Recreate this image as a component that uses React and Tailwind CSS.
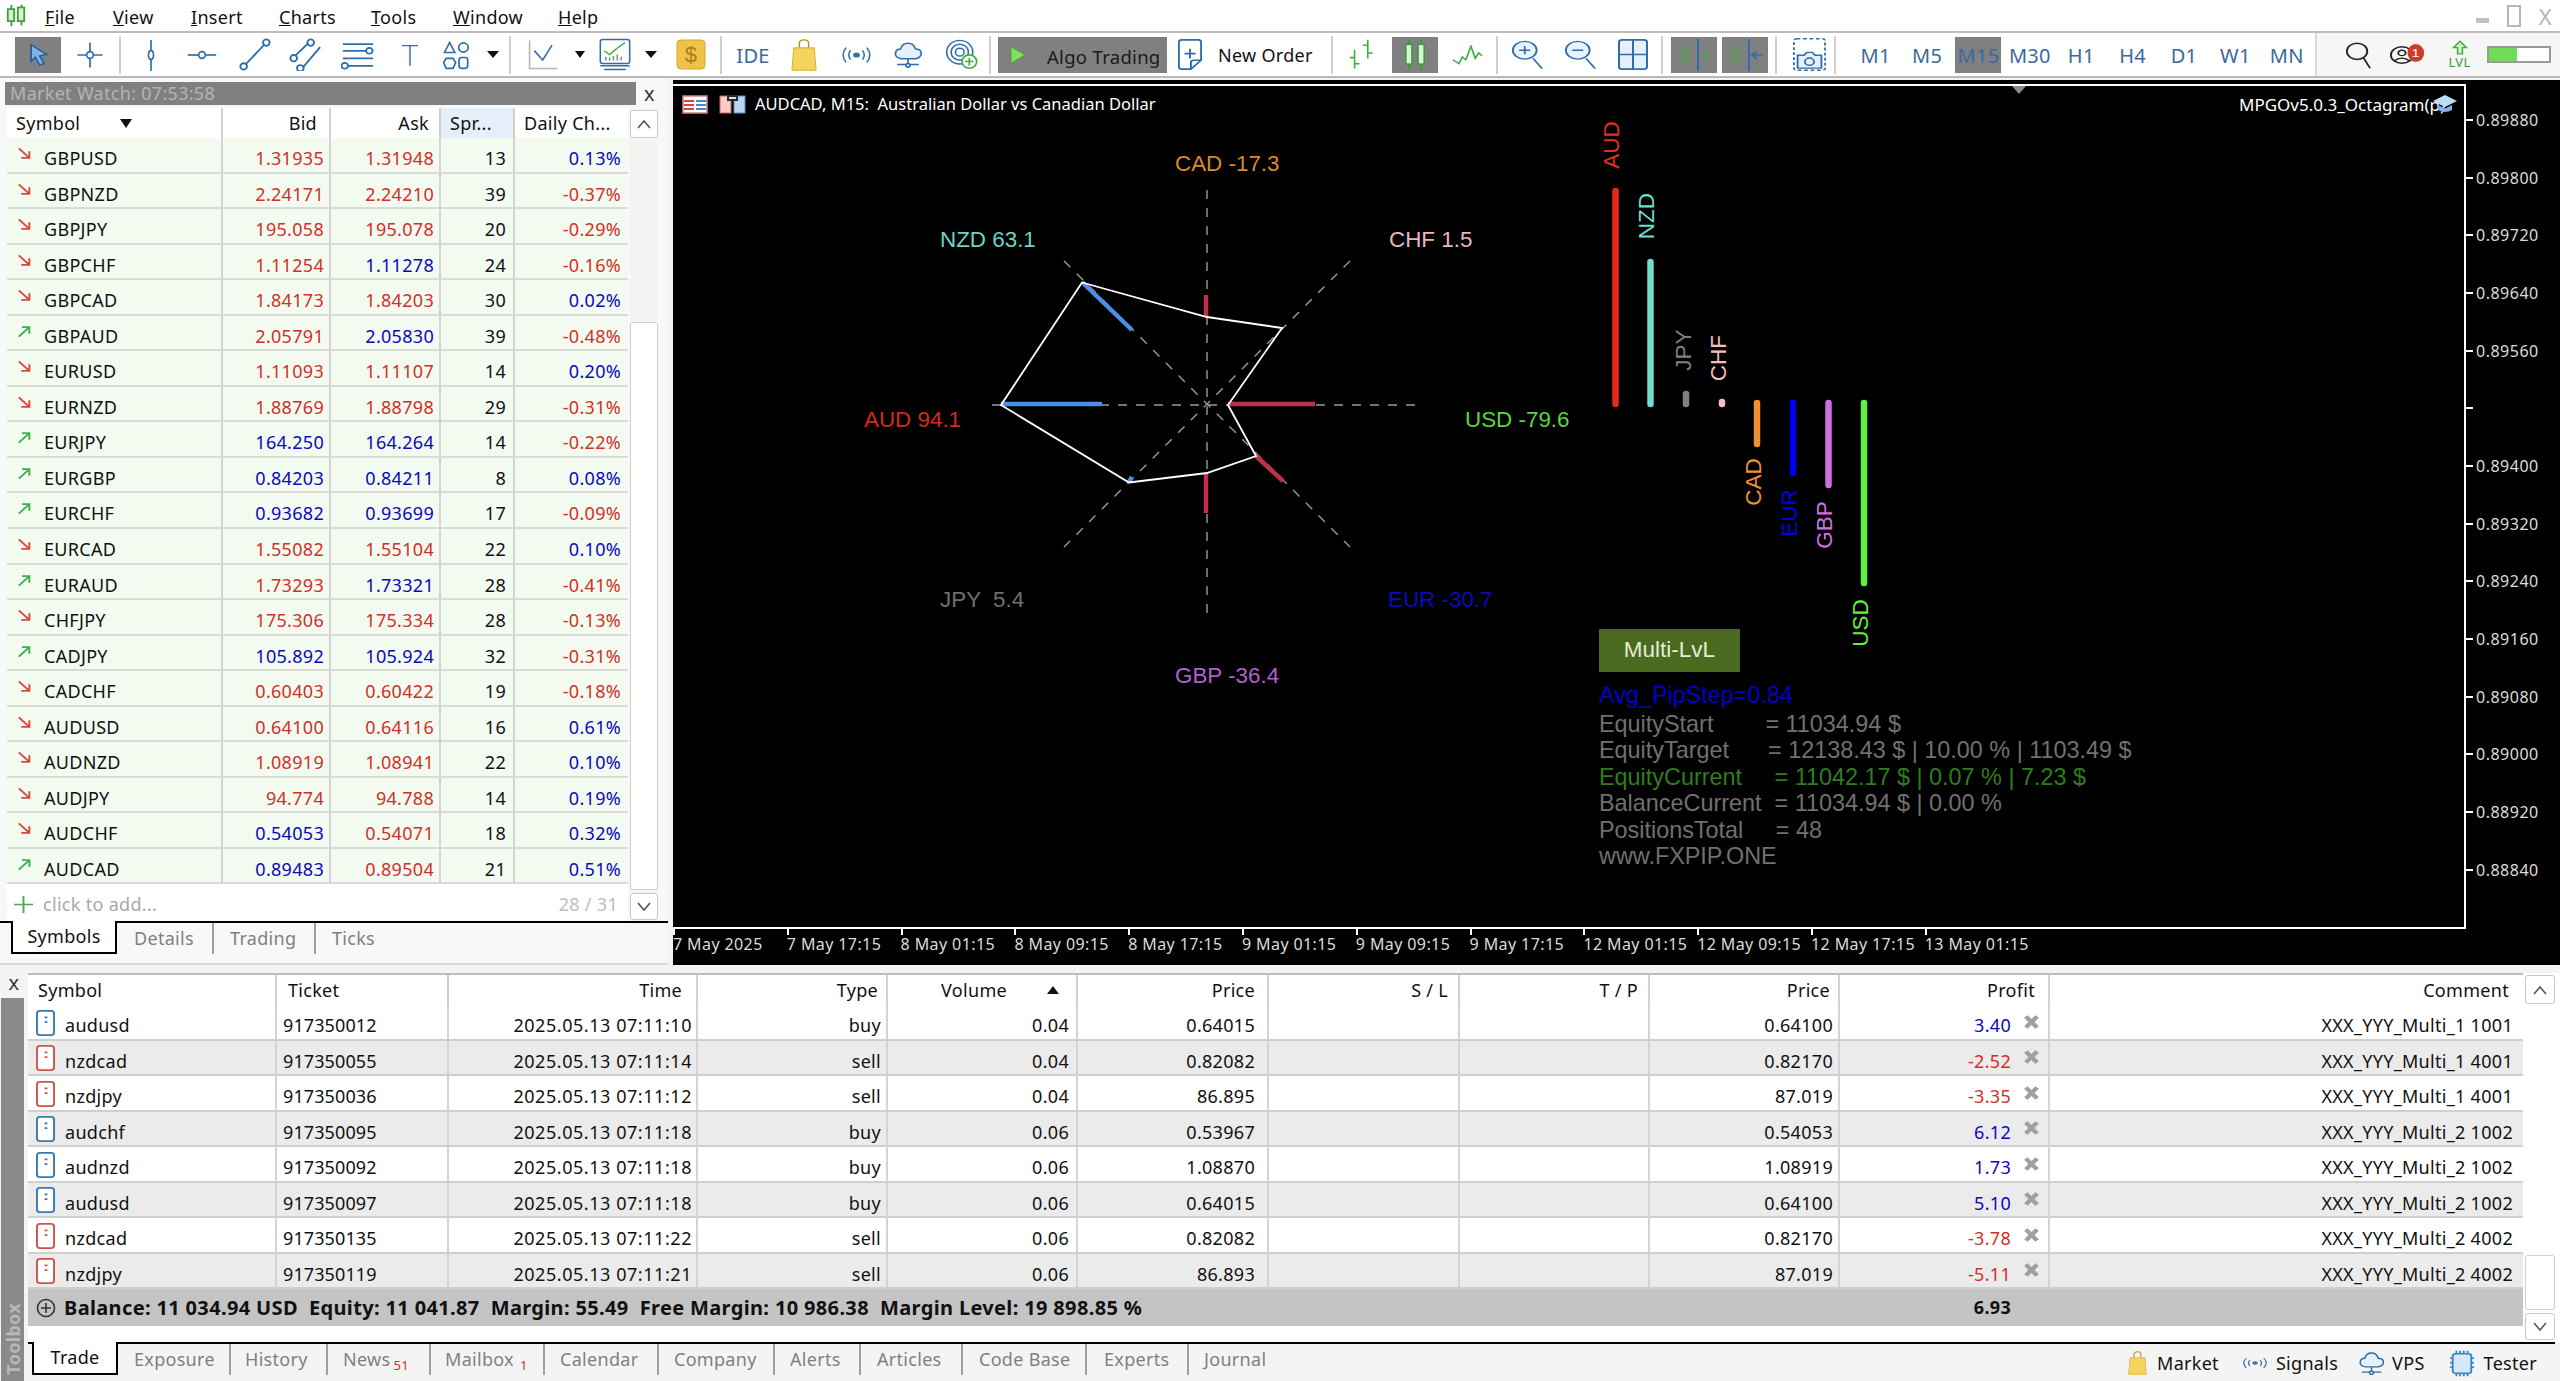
import React from "react";

const B = "#2f6da8";
const G = "#3fae3f";
const Ic = ({ w = 30, h = 30, vb = "0 0 36 36", children }) => (
  <svg width={w} height={h} viewBox={vb} fill="none" stroke={B} strokeWidth="2" preserveAspectRatio="none">{children}</svg>
);

const Logo = () => (
  <svg width="22" height="24" viewBox="0 0 24 28" fill="none" stroke="#3f9f3f" strokeWidth="2" preserveAspectRatio="none">
    <path d="M7 1v5M7 20v6M18 1v3M18 20v5" />
    <rect x="3" y="6" width="7" height="14" fill="#d8f0d0" />
    <rect x="14" y="4" width="7" height="16" fill="#d8f0d0" />
  </svg>
);

const Cursor = () => (
  <svg width="26" height="25" viewBox="0 0 30 36" preserveAspectRatio="none">
    <path d="M7 4l18 14-8 2 5 11-5 2-5-11-5 6z" fill="#7fb2e6" stroke="#1f5f9f" strokeWidth="2" />
  </svg>
);
const Crosshair = () => (<Ic><path d="M18 3v30M3 18h30" /><circle cx="18" cy="18" r="4" fill="#fff" /></Ic>);
const VLine = () => (<Ic h={32}><path d="M18 1v35" /><ellipse cx="18" cy="18" rx="3" ry="5" fill="#fff" /></Ic>);
const HLine = () => (<Ic><path d="M1 18h34" /><circle cx="18" cy="18" r="4" fill="#fff" /></Ic>);
const Trend = () => (<Ic w={34} h={33}><path d="M7 30L29 6" /><circle cx="30" cy="5" r="3.5" fill="#fff" /><circle cx="6" cy="31" r="3.5" fill="#fff" /></Ic>);
const Channel = () => (<Ic w={34} h={33}><path d="M3 23L21 5M14 33L33 10" /><circle cx="23" cy="5" r="3.5" fill="#fff" /><circle cx="5" cy="22" r="3.5" fill="#fff" /><circle cx="12" cy="33" r="3.5" fill="#fff" /></Ic>);
const Fibo = () => (<Ic w={34} h={30}><path d="M2 5h32M2 13h28M2 22h32M6 31h28" /><circle cx="30" cy="13" r="3.5" fill="#fff" /><circle cx="4" cy="31" r="3.5" fill="#fff" /></Ic>);
const TextT = () => (<Ic w={26} h={26}><path d="M7 5h22M18 5v28" /></Ic>);
const Shapes = () => (<Ic w={31} h={30}><path d="M4 15L10 3l6 12zM6 22h8l3 5-3 7H6l-3-7z" /><circle cx="26" cy="9" r="5.5" /><rect x="21" y="21" width="10" height="13" rx="3" /></Ic>);
const DropArrow = () => (<svg width="12" height="7" viewBox="0 0 14 9" preserveAspectRatio="none"><path d="M0 0h14L7 9z" fill="#111" /></svg>);
const LineChart = () => (<Ic w={31} h={31} vb="0 0 40 40"><path d="M2 2v36h36" stroke="#b5b5b5" /><path d="M8 15l11 12 12-19" /></Ic>);
const Template = () => (
  <Ic w={34} h={33} vb="0 0 44 44">
    <rect x="3" y="2" width="38" height="32" rx="3" />
    <path d="M8 17l7 5 8-7 12-9" stroke={G} />
    <path d="M10 30v-5M15 30v-4M20 30v-6M25 30v-8M30 30v-5" stroke="#888" />
    <path d="M3 37h38M8 42h28" />
  </Ic>
);
const Dollar = () => (
  <svg width="30" height="31" viewBox="0 0 30 31">
    <rect x="1" y="1" width="28" height="29" rx="4" fill="#eec348" stroke="#d9a52a" />
    <text x="15" y="23" textAnchor="middle" fontSize="22" fontFamily="Liberation Sans" fill="#a7801b">$</text>
  </svg>
);
const Bag = ({ w = 26, h = 32 }) => (
  <svg width={w} height={h} viewBox="0 0 28 36" fill="none" preserveAspectRatio="none">
    <path d="M9 10V5q0-4 5-4t5 4v5" stroke="#b9921a" strokeWidth="1.6" />
    <path d="M3 10h22l2 25H1z" fill="#f6d45b" stroke="#dfb43a" strokeWidth="1.2" />
  </svg>
);
const Signals = ({ w = 31, h = 24, c = B }) => (
  <svg width={w} height={h} viewBox="0 0 36 36" fill="none" stroke={c} strokeWidth="1.8" preserveAspectRatio="none">
    <circle cx="18" cy="18" r="3" fill={c} />
    <path d="M11 11q-4 7 0 14M25 11q4 7 0 14M6 7q-7 11 0 22M30 7q7 11 0 22" />
  </svg>
);
const Cloud = ({ w = 30, h = 28 }) => (
  <svg width={w} height={h} viewBox="0 0 36 38" fill="#e4f0fb" stroke={B} strokeWidth="2" preserveAspectRatio="none">
    <path d="M10 24q-8-1-7-8 1-5 6-5 2-8 9-8t9 8q6 0 7 5 0 7-7 8z" />
    <path d="M18 24v8M5 32h26" fill="none" />
    <circle cx="18" cy="33" r="2.5" />
  </svg>
);
const Globe = () => (
  <svg width="33" height="33" viewBox="0 0 38 42" fill="none" stroke={B} strokeWidth="1.8" preserveAspectRatio="none">
    <circle cx="17" cy="18" r="15" />
    <circle cx="17" cy="18" r="10" />
    <circle cx="17" cy="18" r="5" />
    <circle cx="28" cy="30" r="8.5" fill="#fff" stroke={G} strokeWidth="2" />
    <path d="M28 25v10M23 30h10" stroke={G} strokeWidth="2" />
  </svg>
);
const NewOrderIcon = () => (
  <svg width="24" height="31" viewBox="0 0 26 38" fill="none" stroke={B} strokeWidth="2" preserveAspectRatio="none">
    <path d="M4 1h18q3 0 3 3v22l-11 11H4q-3 0-3-3V4q0-3 3-3z" />
    <path d="M14 37v-8q0-3 3-3h8M13 12v12M7 18h12" />
  </svg>
);
const Bars = () => (
  <svg width="28" height="31" viewBox="0 0 34 40" fill="none" stroke={G} strokeWidth="2" preserveAspectRatio="none">
    <path d="M8 14v24M2 24h6M8 32h6M24 1v24M18 8h6M24 18h6" />
  </svg>
);
const Candles = () => (
  <svg width="26" height="32" viewBox="0 0 34 42" fill="none" stroke="#3a9a3a" strokeWidth="2" preserveAspectRatio="none">
    <path d="M9 1v6M9 33v8M25 1v6M25 33v8" />
    <rect x="5" y="7" width="8" height="26" fill="#d8f5d0" />
    <rect x="21" y="7" width="8" height="26" fill="#d8f5d0" />
  </svg>
);
const LineG = () => (
  <svg width="31" height="20" viewBox="0 0 36 30" fill="none" stroke={G} strokeWidth="2" preserveAspectRatio="none">
    <path d="M1 22l7 6 4-10 4 4 6-20 5 18 4-8 4 4" />
  </svg>
);
const ZoomI = ({ plus }) => (
  <svg width="33" height="30" viewBox="0 0 36 44" fill="#eaf3fc" stroke={B} strokeWidth="2" preserveAspectRatio="none">
    <circle cx="15" cy="15" r="13" />
    <path d={plus ? "M15 9v12M9 15h12M24 27l10 15" : "M9 15h12M24 27l10 15"} />
  </svg>
);
const GridI = () => (
  <svg width="30" height="31" viewBox="0 0 30 38" fill="#e4f0fb" stroke={B} strokeWidth="2" preserveAspectRatio="none">
    <rect x="1" y="1" width="28" height="36" rx="3" />
    <path d="M15 1v36M1 19h28" />
  </svg>
);
const ScrollI = ({ back }) => (
  <svg width="36" height="32" viewBox="0 0 36 40" fill="none" stroke="#4aa24a" strokeWidth="2" preserveAspectRatio="none">
    <path d="M6 10v20M12 6v28" />
    <path d="M22 0v40" stroke="#2f6da8" />
    {back ? <path d="M36 20H25M30 15l-5 5 5 5" stroke="#2f6da8" /> : <path d="M26 20h8M30 14v12" stroke="#4aa24a" />}
  </svg>
);
const Camera = () => (
  <svg width="33" height="33" viewBox="0 0 36 46" fill="none" stroke={B} strokeWidth="2" preserveAspectRatio="none">
    <rect x="1" y="1" width="34" height="44" rx="3" strokeDasharray="4 3" />
    <path d="M5 24h7l3-4h6l3 4h7v18H5z" fill="#e4f0fb" />
    <circle cx="18" cy="33" r="5" />
  </svg>
);
const Search = () => (
  <svg width="26" height="28" viewBox="0 0 28 38" fill="none" stroke="#222" strokeWidth="2" preserveAspectRatio="none">
    <circle cx="13" cy="14" r="11" />
    <path d="M20 23l7 14" />
  </svg>
);
const User = () => (
  <svg width="37" height="26" viewBox="0 0 40 38" preserveAspectRatio="none">
    <circle cx="14" cy="19" r="12" fill="none" stroke="#222" strokeWidth="2" />
    <circle cx="14" cy="16" r="4" fill="none" stroke="#222" strokeWidth="2" />
    <path d="M5 28q9-9 18 0" fill="none" stroke="#222" strokeWidth="2" />
    <ellipse cx="29" cy="16" rx="9" ry="13" fill="#cf3a2a" />
    <text x="29" y="22" textAnchor="middle" fontSize="15" fontFamily="Liberation Sans" fill="#fff">1</text>
  </svg>
);
const Lvl = () => (
  <div className="flex w-[28px] flex-col items-center">
    <svg width="16" height="15" viewBox="0 0 20 24" fill="#d6f2cc" stroke={G} strokeWidth="2" preserveAspectRatio="none">
      <path d="M10 2L2 12h5v10h6V12h5z" />
    </svg>
    <span className="text-[13px] leading-[14px] text-[#3a9a3a]">LVL</span>
  </div>
);
const Battery = () => (
  <div className="flex h-[17px] w-[64px] border-2 border-[#9a9a9a] bg-white">
    <div className="h-full w-[28px] bg-[#6fdc58]" />
  </div>
);
const TableIco = () => (
  <svg width="26" height="19" viewBox="0 0 26 19">
    <rect x="1" y="1" width="24" height="17" fill="#fff" stroke="#c9867c" strokeWidth="1.5" />
    <path d="M2 6h10M2 10h10M2 14h10" stroke="#d8443a" strokeWidth="2" />
    <path d="M14 6h10M14 10h10M14 14h10" stroke="#4a86c8" strokeWidth="2" />
  </svg>
);
const SaveIco = () => (
  <svg width="27" height="19" viewBox="0 0 27 19">
    <rect x="1" y="1" width="11" height="17" fill="#f9cbc4" stroke="#c9675c" />
    <rect x="15" y="1" width="11" height="17" fill="#b9d6f2" stroke="#5a8ac0" />
    <rect x="8" y="0" width="11" height="6" fill="#2a2a2a" />
    <rect x="10" y="2" width="7" height="2" fill="#ddd" />
  </svg>
);
const DocIco = ({ c }) => (
  <svg width="19" height="26" viewBox="0 0 20 28" fill="#fff" stroke={c} strokeWidth="2" preserveAspectRatio="none">
    <rect x="1" y="1" width="18" height="26" rx="3" />
    <path d="M9 8h3M9 13h3" />
  </svg>
);
const XIco = () => (
  <svg width="15" height="14" viewBox="0 0 16 18" fill="none" stroke="#a0a0a0" strokeWidth="5" preserveAspectRatio="none">
    <path d="M2 2l12 14M14 2L2 16" />
  </svg>
);
const ArrowDn = () => (
  <svg width="13" height="13" viewBox="0 0 16 18" fill="none" stroke="#d8493c" strokeWidth="2.4" preserveAspectRatio="none">
    <path d="M1 2l13 13M14 6v9H4" />
  </svg>
);
const ArrowUp = () => (
  <svg width="13" height="13" viewBox="0 0 16 18" fill="none" stroke="#3eb04a" strokeWidth="2.4" preserveAspectRatio="none">
    <path d="M1 16L14 3M5 3h9v9" />
  </svg>
);
const Chev = ({ up }) => (
  <svg width="14" height="10" viewBox="0 0 14 10" fill="none" stroke="#555" strokeWidth="1.6">
    <path d={up ? "M1 9l6-7 6 7" : "M1 1l6 7 6-7"} />
  </svg>
);
const Chip = () => (
  <svg width="26" height="27" viewBox="0 0 28 36" fill="#d6e8f8" stroke="#2f86c8" strokeWidth="2" preserveAspectRatio="none">
    <path d="M8 1v5M12 1v5M16 1v5M20 1v5M8 30v5M12 30v5M16 30v5M20 30v5M1 11h3M1 17h3M1 23h3M24 11h3M24 17h3M24 23h3" />
    <rect x="4" y="5" width="20" height="26" rx="3" />
  </svg>
);

const Slot = ({ className = "", children }) => (
  <div className={"flex h-full shrink-0 items-center justify-center " + className}>{children}</div>
);
const Sep = () => <div className="h-[38px] w-[2px] shrink-0 bg-[#cfcfcf]" />;
const TF = ({ children, on }) => (
  <Slot className="w-[51.4px]">
    <span className={"flex h-[36px] w-[46px] items-center justify-center pt-[2px] text-[20px] text-[#3a6a9a] " + (on ? "bg-[#808080]" : "")}>{children}</span>
  </Slot>
);

const R = "#d03028";
const U = "#0a0ab8";
const rows = [
  ["GBPUSD", 0, "1.31935", R, "1.31948", R, "13", "0.13%", U],
  ["GBPNZD", 0, "2.24171", R, "2.24210", R, "39", "-0.37%", R],
  ["GBPJPY", 0, "195.058", R, "195.078", R, "20", "-0.29%", R],
  ["GBPCHF", 0, "1.11254", R, "1.11278", U, "24", "-0.16%", R],
  ["GBPCAD", 0, "1.84173", R, "1.84203", R, "30", "0.02%", U],
  ["GBPAUD", 1, "2.05791", R, "2.05830", U, "39", "-0.48%", R],
  ["EURUSD", 0, "1.11093", R, "1.11107", R, "14", "0.20%", U],
  ["EURNZD", 0, "1.88769", R, "1.88798", R, "29", "-0.31%", R],
  ["EURJPY", 1, "164.250", U, "164.264", U, "14", "-0.22%", R],
  ["EURGBP", 1, "0.84203", U, "0.84211", U, "8", "0.08%", U],
  ["EURCHF", 1, "0.93682", U, "0.93699", U, "17", "-0.09%", R],
  ["EURCAD", 0, "1.55082", R, "1.55104", R, "22", "0.10%", U],
  ["EURAUD", 1, "1.73293", R, "1.73321", U, "28", "-0.41%", R],
  ["CHFJPY", 0, "175.306", R, "175.334", R, "28", "-0.13%", R],
  ["CADJPY", 1, "105.892", U, "105.924", U, "32", "-0.31%", R],
  ["CADCHF", 0, "0.60403", R, "0.60422", R, "19", "-0.18%", R],
  ["AUDUSD", 0, "0.64100", R, "0.64116", R, "16", "0.61%", U],
  ["AUDNZD", 0, "1.08919", R, "1.08941", R, "22", "0.10%", U],
  ["AUDJPY", 0, "94.774", R, "94.788", R, "14", "0.19%", U],
  ["AUDCHF", 0, "0.54053", U, "0.54071", R, "18", "0.32%", U],
  ["AUDCAD", 1, "0.89483", U, "0.89504", R, "21", "0.51%", U],
];

const trades = [
  ["audusd", "917350012", "2025.05.13 07:11:10", "buy", "0.04", "0.64015", "0.64100", "3.40", "XXX_YYY_Multi_1 1001"],
  ["nzdcad", "917350055", "2025.05.13 07:11:14", "sell", "0.04", "0.82082", "0.82170", "-2.52", "XXX_YYY_Multi_1 4001"],
  ["nzdjpy", "917350036", "2025.05.13 07:11:12", "sell", "0.04", "86.895", "87.019", "-3.35", "XXX_YYY_Multi_1 4001"],
  ["audchf", "917350095", "2025.05.13 07:11:18", "buy", "0.06", "0.53967", "0.54053", "6.12", "XXX_YYY_Multi_2 1002"],
  ["audnzd", "917350092", "2025.05.13 07:11:18", "buy", "0.06", "1.08870", "1.08919", "1.73", "XXX_YYY_Multi_2 1002"],
  ["audusd", "917350097", "2025.05.13 07:11:18", "buy", "0.06", "0.64015", "0.64100", "5.10", "XXX_YYY_Multi_2 1002"],
  ["nzdcad", "917350135", "2025.05.13 07:11:22", "sell", "0.06", "0.82082", "0.82170", "-3.78", "XXX_YYY_Multi_2 4002"],
  ["nzdjpy", "917350119", "2025.05.13 07:11:21", "sell", "0.06", "86.893", "87.019", "-5.11", "XXX_YYY_Multi_2 4002"],
];

const prices = ["0.89880", "0.89800", "0.89720", "0.89640", "0.89560", "", "0.89400", "0.89320", "0.89240", "0.89160", "0.89080", "0.89000", "0.88920", "0.88840"];
const times = ["7 May 2025", "7 May 17:15", "8 May 01:15", "8 May 09:15", "8 May 17:15", "9 May 01:15", "9 May 09:15", "9 May 17:15", "12 May 01:15", "12 May 09:15", "12 May 17:15", "13 May 01:15"];

const MW_COLS = "grid grid-cols-[216px_108px_110px_74px_113px]";
const TR_COLS = "grid grid-cols-[249px_172px_249px_190px_190px_191px_191px_190px_190px_210px_473px]";
const cellR = "flex h-full items-center justify-end border-r-2 border-[#d4d4d4] pt-[7px]";
const hdr = "flex h-full items-center border-r-2 border-[#d0d0d0]";

function Radar() {
  return (
    <svg className="absolute inset-0" width="1791" height="841" viewBox="673 86 1791 841" fill="none">
      <g stroke="#9a9a9a" strokeWidth="1.4" strokeDasharray="9 9">
        <path d="M1207 190V613M992 405H1415M1064 261L1350 547M1350 261L1064 547" />
      </g>
      <g strokeWidth="4.5">
        <path d="M1082 282L1132 330M1001 404H1102M1129 482L1132 477" stroke="#4a8ee8" />
        <path d="M1206 295V317M1228 404H1315M1256 456L1283 481M1206 473V513" stroke="#c0304a" />
      </g>
      <path d="M1082 282.5L1207 317L1282 328L1228 405L1256 456L1207 473L1129 482.5L1001 405Z" stroke="#fff" strokeWidth="1.8" />
      <g strokeWidth="6.5" strokeLinecap="round">
        <path d="M1615.5 191V404" stroke="#e8281c" />
        <path d="M1650.5 262V404" stroke="#6fdccc" />
        <path d="M1686 394V404" stroke="#808080" />
        <path d="M1722 402V404" stroke="#f0c0c0" />
        <path d="M1757 403V444" stroke="#f09030" />
        <path d="M1793 403V473" stroke="#0000f0" />
        <path d="M1828.5 403V485" stroke="#d070e0" />
        <path d="M1864 403V583" stroke="#60f040" />
      </g>
      <path d="M2012 86h14l-7 8z" fill="#8a8a8a" />
    </svg>
  );
}

const RotLabel = ({ className, children }) => (
  <span className={"absolute -translate-x-1/2 -translate-y-1/2 -rotate-90 text-[22.5px] leading-none " + className}>{children}</span>
);
const Lbl = ({ className, children }) => (
  <span className={"absolute -translate-y-1/2 whitespace-pre text-[22.4px] leading-none " + className}>{children}</span>
);

export default function App() {
  return (
    <div className="flex h-[1381px] w-[2560px] flex-col overflow-hidden bg-[#f4f4f4] font-['Noto_Sans',sans-serif] text-[18px] tracking-[0.3px] text-[#111]">
      {/* menu */}
      <div className="relative flex h-[33px] shrink-0 items-center border-b-2 border-[#bdbdbd] bg-white pl-[5px]">
        <Logo />
        <div className="ml-[18px] mt-[3px] flex">
          <span className="w-[68px]"><u>F</u>ile</span>
          <span className="w-[78px]"><u>V</u>iew</span>
          <span className="w-[88px]"><u>I</u>nsert</span>
          <span className="w-[92px]"><u>C</u>harts</span>
          <span className="w-[82px]"><u>T</u>ools</span>
          <span className="w-[105px]"><u>W</u>indow</span>
          <span><u>H</u>elp</span>
        </div>
        <div className="ml-auto flex items-center gap-[18px] pr-[8px] text-[#b5b5b5]">
          <span className="mt-[10px] h-[5px] w-[13px] bg-[#c0c0c0]" />
          <span className="h-[22px] w-[14px] border-2 border-[#b5b5b5]" />
          <span className="text-[22px] leading-none">X</span>
        </div>
      </div>
      {/* toolbar */}
      <div className="flex h-[45px] shrink-0 items-center border-b-2 border-[#b8b8b8] bg-white pl-[15px]">
        <Slot className="w-[46px] !h-[36px] bg-[#808080]"><Cursor /></Slot>
        <Slot className="w-[58px]"><Crosshair /></Slot>
        <Sep />
        <Slot className="w-[60px]"><VLine /></Slot>
        <Slot className="w-[42px]"><HLine /></Slot>
        <Slot className="w-[64px]"><Trend /></Slot>
        <Slot className="w-[38px]"><Channel /></Slot>
        <Slot className="w-[66px]"><Fibo /></Slot>
        <Slot className="w-[38px]"><TextT /></Slot>
        <Slot className="w-[54px]"><Shapes /></Slot>
        <Slot className="w-[20px]"><DropArrow /></Slot>
        <div className="w-[6px]" />
        <Sep />
        <Slot className="w-[64px]"><LineChart /></Slot>
        <Slot className="w-[10px]"><DropArrow /></Slot>
        <Slot className="w-[59px]"><Template /></Slot>
        <Slot className="w-[14px]"><DropArrow /></Slot>
        <Slot className="w-[62px] pl-[4px]"><Dollar /></Slot>
        <Sep />
        <Slot className="w-[62px] pt-[2px] text-[20px] text-[#3a6a9a]">IDE</Slot>
        <Slot className="w-[40px]"><Bag /></Slot>
        <Slot className="w-[64px]"><Signals /></Slot>
        <Slot className="w-[40px]"><Cloud /></Slot>
        <Slot className="w-[61px] pl-[5px]"><Globe /></Slot>
        <Sep />
        <div className="w-[7px]" />
        <div className="flex h-[36px] w-[169px] shrink-0 items-center bg-[#808080] pl-[12px]">
          <svg width="16" height="18" viewBox="0 0 16 26" preserveAspectRatio="none"><path d="M1 1l14 12L1 25z" fill="#7fe05c" stroke="#3f9f3f" /></svg>
          <span className="ml-[21px] mt-[4px] whitespace-nowrap text-[18.5px] text-[#1a1a1a]">Algo Trading</span>
        </div>
        <Slot className="w-[46px]"><NewOrderIcon /></Slot>
        <span className="ml-[5px] mt-[2px] w-[113px] shrink-0 whitespace-nowrap">New Order</span>
        <Sep />
        <Slot className="w-[58px]"><Bars /></Slot>
        <Slot className="ml-[1px] w-[46px] !h-[36px] bg-[#808080]"><Candles /></Slot>
        <Slot className="w-[58px]"><LineG /></Slot>
        <Sep />
        <Slot className="w-[58px]"><ZoomI plus /></Slot>
        <Slot className="w-[48px]"><ZoomI /></Slot>
        <Slot className="w-[57px]"><GridI /></Slot>
        <Sep />
        <Slot className="ml-[8px] w-[46px] !h-[36px] bg-[#808080]"><ScrollI /></Slot>
        <Slot className="ml-[5px] w-[46px] !h-[36px] bg-[#808080]"><ScrollI back /></Slot>
        <div className="w-[7px]" />
        <Sep />
        <Slot className="w-[57px] pl-[7px]"><Camera /></Slot>
        <Sep />
        <div className="ml-[14px] flex h-full">
          <TF>M1</TF><TF>M5</TF><TF on>M15</TF><TF>M30</TF><TF>H1</TF><TF>H4</TF><TF>D1</TF><TF>W1</TF><TF>MN</TF>
        </div>
        <div className="ml-[2px] flex h-full flex-1 items-center border-l-2 border-[#d8d8d8] bg-[#f6f6f6] pl-[28px]">
          <Search />
          <div className="ml-[18px]"><User /></div>
          <div className="ml-[20px]"><Lvl /></div>
          <div className="ml-[13px]"><Battery /></div>
        </div>
      </div>
      {/* main */}
      <div className="flex h-[887px] shrink-0">
        {/* market watch */}
        <div className="flex w-[668px] shrink-0 flex-col border-b-2 border-[#d8d8d8] bg-[#f8f8f8]">
          <div className="mt-[4px] flex h-[23px] items-center">
            <div className="ml-[5px] flex h-full w-[631px] items-center bg-[#808080] pl-[5px] text-[18px] text-[#b4b4b4]">Market Watch: 07:53:58</div>
            <span className="ml-[8px] text-[20px] leading-none text-[#333]">x</span>
          </div>
          <div className="mt-[3px] flex h-[813px]">
            <div className="ml-[7px] flex w-[621px] flex-col bg-white">
              <div className={MW_COLS + " h-[30px] bg-white"}>
                <div className={hdr + " pl-[9px]"}>Symbol<svg className="ml-[40px]" width="12" height="9" viewBox="0 0 12 9"><path d="M0 0h12L6 9z" fill="#111" /></svg></div>
                <div className={hdr + " justify-end pr-[12px]"}>Bid</div>
                <div className={hdr + " justify-end pr-[10px]"}>Ask</div>
                <div className={hdr + " bg-[#e4effa] pl-[9px]"}>Spr...</div>
                <div className="flex h-full items-center whitespace-nowrap pl-[9px]">Daily Ch...</div>
              </div>
              {rows.map((r) => (
                <div key={r[0]} className={MW_COLS + " h-[35.55px] border-b-2 border-[#d8dcd6] bg-[#f3fbf0]"}>
                  <div className={cellR + " !justify-start pl-[11px]"}>
                    <span className="-mt-[10px]">{r[1] ? <ArrowUp /> : <ArrowDn />}</span>
                    <span className="ml-[13px]">{r[0]}</span>
                  </div>
                  <div className={cellR + " pr-[5px]"} style={{ color: r[3] }}>{r[2]}</div>
                  <div className={cellR + " pr-[5px]"} style={{ color: r[5] }}>{r[4]}</div>
                  <div className={cellR + " pr-[7px]"}>{r[6]}</div>
                  <div className="flex h-full items-center justify-end pr-[7px] pt-[7px]" style={{ color: r[8] }}>{r[7]}</div>
                </div>
              ))}
              <div className="flex flex-1 items-center bg-white pl-[7px] pr-[10px] pt-[4px] text-[#a8a8a8]">
                <svg width="19" height="17" viewBox="0 0 20 20" stroke="#4fa84f" strokeWidth="2" preserveAspectRatio="none"><path d="M10 0v20M0 10h20" /></svg>
                <span className="ml-[10px]">click to add...</span>
                <span className="ml-auto text-[#bdbdbd]">28 / 31</span>
              </div>
            </div>
            <div className="ml-[2px] flex w-[28px] flex-col bg-[#f4f4f4]">
              <div className="mt-[2px] flex h-[28px] items-center justify-center rounded-[3px] border border-[#c8c8c8] bg-white"><Chev up /></div>
              <div className="h-[184px]" />
              <div className="h-[568px] rounded-[3px] border border-[#d0d0d0] bg-white" />
              <div className="mt-[3px] flex h-[27px] items-center justify-center rounded-[3px] border border-[#c8c8c8] bg-white"><Chev /></div>
            </div>
          </div>
          <div className="flex h-[33px] items-start border-t-2 border-black text-[#808080]">
            <div className="ml-[11px] -mt-[2px] flex h-[33px] w-[106px] items-center justify-center border-x-2 border-b-2 border-black bg-white text-[#111]">Symbols</div>
            <div className="flex h-[31px] w-[97px] items-center border-r-2 border-[#a0a0a0] pl-[17px]">Details</div>
            <div className="flex h-[31px] w-[102px] items-center border-r-2 border-[#a0a0a0] pl-[16px]">Trading</div>
            <div className="flex h-[31px] items-center pl-[16px]">Ticks</div>
          </div>
        </div>
        {/* chart */}
        <div className="ml-[5px] mt-[2px] flex flex-1 flex-col bg-black pt-[4px] font-['Liberation_Sans',sans-serif] tracking-normal">
          <div className="flex h-[845px] shrink-0">
            <div className="relative h-[845px] w-[1793px] shrink-0 border-y-2 border-r-2 border-white">
              <Radar />
              <div className="absolute left-[9px] top-[9px] flex gap-[11px]"><TableIco /><SaveIco /></div>
              <span className="absolute left-[82px] top-[18px] -translate-y-1/2 whitespace-pre font-['Noto_Sans',sans-serif] text-[16.5px] leading-none text-white">AUDCAD, M15:  Australian Dollar vs Canadian Dollar</span>
              <span className="absolute left-[1566px] top-[18px] -translate-y-1/2 whitespace-pre font-['Noto_Sans',sans-serif] text-[17px] leading-none text-white">MPGOv5.0.3_Octagram(p)</span>
              <svg className="absolute left-[1760px] top-[8px]" width="24" height="20" viewBox="0 0 24 20"><path d="M12 1L24 7 12 13 0 7z" fill="#bcdcf6" /><path d="M5 11v5q7 4 14 0v-5l-7 3.5z" fill="#7fb2e6" /></svg>

              <Lbl className="left-[502px] top-[78px] text-[#d98a2b]">CAD -17.3</Lbl>
              <Lbl className="left-[267px] top-[154px] text-[#6fd3c4]">NZD 63.1</Lbl>
              <Lbl className="left-[716px] top-[154px] text-[#e8b8b8]">CHF 1.5</Lbl>
              <Lbl className="left-[191px] top-[334px] text-[#d42a20]">AUD 94.1</Lbl>
              <Lbl className="left-[792px] top-[334px] text-[#5ad83a]">USD -79.6</Lbl>
              <Lbl className="left-[267px] top-[514px] text-[#707070]">JPY  5.4</Lbl>
              <Lbl className="left-[715px] top-[514px] text-[#0a0ac0]">EUR -30.7</Lbl>
              <Lbl className="left-[502px] top-[590px] text-[#b060d0]">GBP -36.4</Lbl>

              <RotLabel className="left-[939px] top-[59px] text-[#e0301e]">AUD</RotLabel>
              <RotLabel className="left-[974px] top-[130px] text-[#6fdccc]">NZD</RotLabel>
              <RotLabel className="left-[1011px] top-[264px] text-[#808080]">JPY</RotLabel>
              <RotLabel className="left-[1046px] top-[272px] text-[#f0c0c0]">CHF</RotLabel>
              <RotLabel className="left-[1081px] top-[396px] text-[#f09030]">CAD</RotLabel>
              <RotLabel className="left-[1117px] top-[427px] text-[#0000e0]">EUR</RotLabel>
              <RotLabel className="left-[1152px] top-[439px] text-[#d070e0]">GBP</RotLabel>
              <RotLabel className="left-[1188px] top-[537px] text-[#60f040]">USD</RotLabel>

              <div className="absolute left-[926px] top-[543px] flex flex-col text-[23.4px] leading-[26.5px] text-[#707070]">
                <div className="flex h-[43px] w-[141px] items-center justify-center bg-[#4a6a20] text-[22.5px] text-[#e4ecd4]">Multi-LvL</div>
                <span className="mt-[10px] whitespace-pre text-[#0000c8]">Avg_PipStep=0.84</span>
                <span className="mt-[2px] whitespace-pre">{"EquityStart        = 11034.94 $"}</span>
                <span className="whitespace-pre">{"EquityTarget      = 12138.43 $ | 10.00 % | 1103.49 $"}</span>
                <span className="whitespace-pre text-[#2e7d1e]">{"EquityCurrent     = 11042.17 $ | 0.07 % | 7.23 $"}</span>
                <span className="whitespace-pre">{"BalanceCurrent  = 11034.94 $ | 0.00 %"}</span>
                <span className="whitespace-pre">{"PositionsTotal     = 48"}</span>
                <span className="whitespace-pre">www.FXPIP.ONE</span>
              </div>
            </div>
            <div className="flex flex-col pt-[7px] font-['Noto_Sans',sans-serif] text-[16px] tracking-[0.5px] text-[#dcdcdc]">
              {prices.map((p, i) => (
                <div key={i} className="flex h-[57.7px] items-center">
                  <span className="h-[2px] w-[7px] bg-white" />
                  <span className="ml-[3px]">{p}</span>
                </div>
              ))}
            </div>
          </div>
          <div className="flex font-['Noto_Sans',sans-serif] text-[16px] tracking-[0.4px] text-[#dcdcdc]">
            {times.map((t) => (
              <div key={t} className="flex w-[113.8px] shrink-0 flex-col">
                <span className="-mt-[2px] h-[8px] w-[2px] bg-white" />
                <span className="-mt-[2px] whitespace-nowrap leading-[22px]">{t}</span>
              </div>
            ))}
          </div>
        </div>
      </div>
      {/* toolbox */}
      <div className="flex min-h-0 flex-1">
        <div className="flex w-[28px] shrink-0 flex-col items-center pt-[8px]">
          <span className="text-[20px] leading-none text-[#333]">x</span>
          <div className="ml-[-3px] mt-[5px] flex w-[23px] flex-1 items-end justify-center bg-[#8a8a8a] pb-[6px]">
            <span className="rotate-180 text-[18px] font-bold leading-none text-[#b8b8b8] [writing-mode:vertical-rl]">Toolbox</span>
          </div>
        </div>
        <div className="flex min-w-0 flex-1 flex-col pt-[8px]">
          <div className="flex h-[369px] shrink-0 bg-white">
            <div className="flex w-[2495px] shrink-0 flex-col border-t-2 border-[#bdbdbd]">
              <div className={TR_COLS + " h-[30px] bg-white"}>
                <div className={hdr + " pl-[10px]"}>Symbol</div>
                <div className={hdr + " pl-[11px]"}>Ticket</div>
                <div className={hdr + " justify-end pr-[14px]"}>Time</div>
                <div className={hdr + " justify-end pr-[8px]"}>Type</div>
                <div className={hdr + " justify-end pr-[17px]"}>Volume<svg className="ml-[40px]" width="12" height="8" viewBox="0 0 12 8"><path d="M0 8h12L6 0z" fill="#111" /></svg></div>
                <div className={hdr + " justify-end pr-[12px]"}>Price</div>
                <div className={hdr + " justify-end pr-[10px]"}>S / L</div>
                <div className={hdr + " justify-end pr-[10px]"}>T / P</div>
                <div className={hdr + " justify-end pr-[8px]"}>Price</div>
                <div className={hdr + " justify-end pr-[13px]"}>Profit</div>
                <div className="flex h-full items-center justify-end pr-[14px]">Comment</div>
              </div>
              {trades.map((t, i) => {
                const buy = t[3] === "buy";
                return (
                  <div key={t[1]} className={TR_COLS + " h-[35.5px] border-b-2 border-[#cfcfcf] " + (i % 2 ? "bg-[#ebebeb]" : "bg-white")}>
                    <div className={cellR + " !justify-start pl-[8px]"}>
                      <span className="-mt-[6px]"><DocIco c={buy ? "#3a78b0" : "#d0524a"} /></span>
                      <span className="ml-[10px]">{t[0]}</span>
                    </div>
                    <div className={cellR + " !justify-start pl-[6px] tracking-[0.1px]"}>{t[1]}</div>
                    <div className={cellR + " pr-[4px] tracking-[0.55px]"}>{t[2]}</div>
                    <div className={cellR + " pr-[5px]"}>{t[3]}</div>
                    <div className={cellR + " pr-[7px]"}>{t[4]}</div>
                    <div className={cellR + " pr-[12px]"}>{t[5]}</div>
                    <div className={cellR} />
                    <div className={cellR} />
                    <div className={cellR + " pr-[5px]"}>{t[6]}</div>
                    <div className={cellR + " pr-[9px]"}>
                      <span style={{ color: t[7][0] === "-" ? R : U }}>{t[7]}</span>
                      <span className="ml-[13px] -mt-[8px]"><XIco /></span>
                    </div>
                    <div className="flex h-full items-center justify-end pr-[10px] pt-[7px]">{t[8]}</div>
                  </div>
                );
              })}
              <div className="flex h-[37px] w-[2495px] items-center bg-[#c4c4c4] font-bold">
                <div className="flex w-[1983px] items-center justify-between">
                  <div className="flex items-center pl-[8px]">
                    <svg width="20" height="20" viewBox="0 0 20 20" fill="none" stroke="#333" strokeWidth="1.6"><circle cx="10" cy="10" r="8.5" /><path d="M10 5v10M5 10h10" /></svg>
                    <span className="ml-[8px] whitespace-pre text-[20px] tracking-[0.35px]">{"Balance: 11 034.94 USD  Equity: 11 041.87  Margin: 55.49  Free Margin: 10 986.38  Margin Level: 19 898.85 %"}</span>
                  </div>
                  <span>6.93</span>
                </div>
              </div>
            </div>
            <div className="ml-[2px] flex w-[30px] flex-col">
              <div className="mt-[2px] flex h-[29px] items-center justify-center rounded-[3px] border border-[#c8c8c8] bg-white"><Chev up /></div>
              <div className="h-[251px]" />
              <div className="h-[55px] rounded-[3px] border border-[#d0d0d0] bg-white" />
              <div className="mt-[3px] flex h-[27px] items-center justify-center rounded-[3px] border border-[#c8c8c8] bg-white"><Chev /></div>
            </div>
          </div>
          <div className="mr-[5px] flex h-[33px] items-start border-t-2 border-black text-[#808080]">
            <div className="ml-[4px] -mt-[2px] flex h-[33px] w-[86px] shrink-0 items-center justify-center border-x-2 border-b-2 border-black bg-white text-[#111]">Trade</div>
            <div className="flex h-[31px] w-[113px] items-center border-r-2 border-[#a0a0a0] pl-[16px]">Exposure</div>
            <div className="flex h-[31px] w-[97px] items-center border-r-2 border-[#a0a0a0] pl-[14px]">History</div>
            <div className="flex h-[31px] w-[103px] items-center border-r-2 border-[#a0a0a0] pl-[15px]">News<span className="ml-[3px] mt-[12px] text-[13px] leading-none text-[#d03028]">51</span></div>
            <div className="flex h-[31px] w-[114px] items-center border-r-2 border-[#a0a0a0] pl-[14px]">Mailbox<span className="ml-[6px] mt-[12px] text-[13px] leading-none text-[#d03028]">1</span></div>
            <div className="flex h-[31px] w-[114px] items-center border-r-2 border-[#a0a0a0] pl-[15px]">Calendar</div>
            <div className="flex h-[31px] w-[116px] items-center border-r-2 border-[#a0a0a0] pl-[15px]">Company</div>
            <div className="flex h-[31px] w-[86px] items-center border-r-2 border-[#a0a0a0] pl-[15px]">Alerts</div>
            <div className="flex h-[31px] w-[102px] items-center border-r-2 border-[#a0a0a0] pl-[16px]">Articles</div>
            <div className="flex h-[31px] w-[124px] items-center border-r-2 border-[#a0a0a0] pl-[16px]">Code Base</div>
            <div className="flex h-[31px] w-[102px] items-center border-r-2 border-[#a0a0a0] pl-[17px]">Experts</div>
            <div className="flex h-[31px] items-center pl-[15px]">Journal</div>
            <div className="ml-auto flex h-[38px] items-center pr-[18px] text-[#111]">
              <Bag w={19} h={24} />
              <span className="ml-[10px]">Market</span>
              <span className="ml-[23px]"><Signals w={26} h={16} c="#3a6fb0" /></span>
              <span className="ml-[8px]">Signals</span>
              <span className="ml-[20px]"><Cloud w={27} h={25} /></span>
              <span className="ml-[7px]">VPS</span>
              <span className="ml-[24px]"><Chip /></span>
              <span className="ml-[9px]">Tester</span>
            </div>
          </div>
        </div>
      </div>
    </div>
  );
}
